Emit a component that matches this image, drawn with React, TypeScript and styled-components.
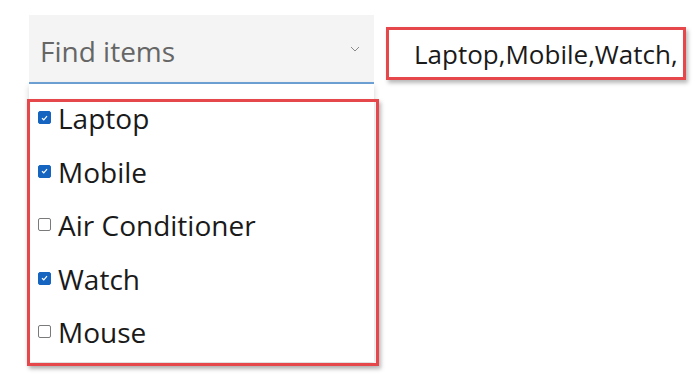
import React from 'react';
import styled, { createGlobalStyle } from 'styled-components';

const GlobalStyle = createGlobalStyle`
  body {
    margin: 0;
    background: #ffffff;
    font-family: 'Open Sans', 'Noto Sans', sans-serif;
  }
`;

const Page = styled.div`
  display: flex;
  align-items: flex-start;
  padding: 15px 0 0 29px;
  width: 700px;
  height: 374px;
  box-sizing: border-box;
`;

const Combo = styled.div`
  position: relative;
  width: 345px;
`;

const Field = styled.div`
  display: flex;
  align-items: center;
  justify-content: space-between;
  height: 69px;
  box-sizing: border-box;
  padding: 4px 14px 0 11px;
  background: #f4f4f4;
  border-bottom: 2px solid #6fa3d8;
`;

const Placeholder = styled.span`
  font-size: 28px;
  color: #666666;
`;

const Chevron = styled.svg`
  width: 10px;
  height: 6px;
  margin-top: -4px;
`;

const Popup = styled.div`
  position: absolute;
  top: 69px;
  left: 0;
  width: 345px;
  height: 278px;
  background: #ffffff;
  box-shadow: 0 2px 6px rgba(0, 0, 0, 0.18);
`;

const List = styled.ul`
  list-style: none;
  margin: 15px -5px 0 -2px;
  padding: 0 0 11px 8px;
  display: flex;
  flex-direction: column;
  gap: 17.5px;
  border: 3px solid #e5474b;
  box-shadow: 2px 3px 4px rgba(0, 0, 0, 0.28);
`;

const Item = styled.li`
  display: flex;
  align-items: center;
  gap: 7px;
  height: 36px;
  box-sizing: border-box;
  padding-bottom: 4px;
  font-size: 28px;
  color: #1a1a1a;
`;

const Box = styled.span<{ checked: boolean }>`
  display: flex;
  align-items: center;
  justify-content: center;
  flex: none;
  width: 13px;
  height: 13px;
  box-sizing: border-box;
  margin-top: -1px;
  border-radius: 2px;
  background: ${({ checked }) => (checked ? '#1565c0' : '#ffffff')};
  border: 1px solid ${({ checked }) => (checked ? '#1565c0' : '#7a7a7a')};
`;

const Result = styled.div`
  margin: 12px 0 0 12px;
  width: 300px;
  height: 53px;
  box-sizing: border-box;
  border: 3px solid #e5474b;
  box-shadow: 2px 3px 4px rgba(0, 0, 0, 0.28);
  display: flex;
  align-items: center;
  padding-left: 25px;
  font-size: 26px;
  color: #1a1a1a;
  white-space: nowrap;
`;

const items = [
  { label: 'Laptop', checked: true },
  { label: 'Mobile', checked: true },
  { label: 'Air Conditioner', checked: false },
  { label: 'Watch', checked: true },
  { label: 'Mouse', checked: false },
];

const Tick = () => (
  <svg width="7" height="6" viewBox="0 0 7 6">
    <path d="M1 3.2 L2.8 4.8 L6 1.2" fill="none" stroke="#ffffff" strokeWidth="1.2" />
  </svg>
);

export default function App() {
  const selected = items.filter((i) => i.checked).map((i) => i.label + ',').join('');
  return (
    <>
      <GlobalStyle />
      <Page>
        <Combo>
          <Field>
            <Placeholder>Find items</Placeholder>
            <Chevron viewBox="0 0 10 6">
              <path d="M1 1 L5 5 L9 1" fill="none" stroke="#8a8a8a" strokeWidth="1" />
            </Chevron>
          </Field>
          <Popup>
            <List>
              {items.map((it) => (
                <Item key={it.label}>
                  <Box checked={it.checked}>{it.checked && <Tick />}</Box>
                  {it.label}
                </Item>
              ))}
            </List>
          </Popup>
        </Combo>
        <Result>{selected}</Result>
      </Page>
    </>
  );
}
